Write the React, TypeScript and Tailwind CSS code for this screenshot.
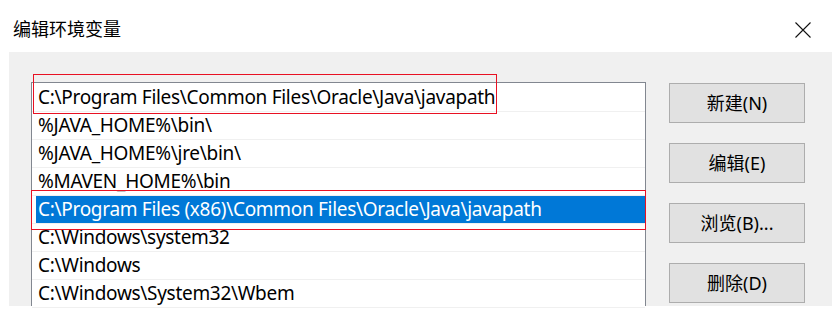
import React from "react";

const rows = [
  "C:\\Program Files\\Common Files\\Oracle\\Java\\javapath",
  "%JAVA_HOME%\\bin\\",
  "%JAVA_HOME%\\jre\\bin\\",
  "%MAVEN_HOME%\\bin",
  "C:\\Program Files (x86)\\Common Files\\Oracle\\Java\\javapath",
  "C:\\Windows\\system32",
  "C:\\Windows",
  "C:\\Windows\\System32\\Wbem",
];

const buttons = ["新建(N)", "编辑(E)", "浏览(B)...", "删除(D)"];

const font = { fontFamily: '"Noto Sans", "Noto Sans CJK SC", sans-serif' };

export default function App() {
  return (
    <div
      className="relative w-[832px] h-[320px] bg-white overflow-hidden text-black"
      style={font}
    >
      <div className="h-[52px] flex items-start justify-between">
        <div className="pl-[13px] pt-[17px] text-[18px] leading-[22px] font-['Noto_Sans_CJK_SC',sans-serif]">
          编辑环境变量
        </div>
        <svg
          className="mt-[22px] mr-[21px]"
          width="16"
          height="16"
          viewBox="0 0 16 16"
        >
          <path d="M0.5 0.5 L15.5 15.5 M15.5 0.5 L0.5 15.5" stroke="#111" strokeWidth="1.1" />
        </svg>
      </div>
      <div className="ml-[9px] h-[254px] bg-[#f0f0f0] flex">
        <div className="ml-[22px] mt-[30px] w-[615px] h-[224px] border border-b-0 border-[#828790] bg-white pt-[1px] relative">
          {rows.map((r, i) => (
            <div key={i} className="h-[28px] border-b border-[#f0f0f0] flex">
              <div
                className={
                  i === 4
                    ? "ml-[4px] flex-1 h-[27px] bg-[#0078d7] text-white pl-[2px] text-[19px] tracking-[-0.3px] leading-[27px] whitespace-nowrap"
                    : "ml-[4px] flex-1 h-[27px] pl-[2px] text-[19px] tracking-[-0.3px] leading-[27px] whitespace-nowrap"
                }
              >
                {r}
              </div>
            </div>
          ))}
        </div>
        <div className="ml-[23px] mt-[31px] flex flex-col gap-[20px]">
          {buttons.map((b) => (
            <div
              key={b}
              className="w-[136px] h-[40px] border border-[#adadad] bg-[#e1e1e1] flex items-center justify-center text-[18px] leading-[22px]"
            >
              {b}
            </div>
          ))}
        </div>
      </div>
      <div className="absolute left-[33px] top-[74px] w-[464px] h-[40px] border border-[#e81123]" />
      <div className="absolute left-[31px] top-[190px] w-[615px] h-[40px] border border-[#e81123]" />
    </div>
  );
}
